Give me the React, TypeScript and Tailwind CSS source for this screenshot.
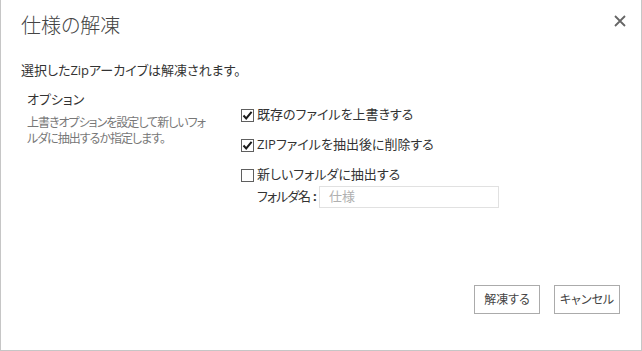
import React from "react";

type CheckRowProps = {
  checked: boolean;
  label: string;
};

function CheckRow({ checked, label }: CheckRowProps) {
  return (
    <div className="flex h-[18px] items-center">
      <span className="flex h-[13px] w-[13px] items-center justify-center border border-[#5f5f5f] bg-white">
        {checked && (
          <svg width="11" height="11" viewBox="0 0 11 11">
            <path d="M1.5 5.5 L4.2 8.4 L9.6 1.8" fill="none" stroke="#1a1a1a" strokeWidth="2" />
          </svg>
        )}
      </span>
      <span className="ml-[3px] whitespace-nowrap text-[13px] text-[#333]">{label}</span>
    </div>
  );
}

export default function App() {
  return (
    <div
      className="flex h-[351px] w-[642px] flex-col border-x border-b border-[#c6c6c6] bg-white text-[#444] [font-feature-settings:'palt']"
      style={{ fontFamily: "'Open Sans', 'Noto Sans CJK JP', sans-serif" }}
    >
      <div className="flex items-start justify-between pl-[20px] pr-[14px] pt-[12px]">
        <h1 className="text-[20px] leading-[28px] font-light text-[#444]">仕様の解凍</h1>
        <button className="mt-[2px] p-[1px]">
          <svg width="12" height="12" viewBox="0 0 12 12">
            <path d="M1 1 L11 11 M11 1 L1 11" stroke="#666" strokeWidth="1.8" />
          </svg>
        </button>
      </div>

      <p className="mt-[21px] pl-[20px] text-[13px] leading-[18px] text-[#333]">
        選択したZipアーカイブは解凍されます。
      </p>

      <div className="mt-[11px] flex">
        <div className="w-[240px] shrink-0 pl-[26px]">
          <div className="text-[13px] leading-[18px] text-[#333]">オプション</div>
          <p className="mt-[7px] whitespace-nowrap text-[12px] leading-[16px] tracking-[-1px] text-[#777]">
            上書きオプションを設定して新しいフォ
            <br />
            ルダに抽出するか指定します。
          </p>
        </div>
        <div className="flex flex-col pt-[16px]">
          <CheckRow checked label="既存のファイルを上書きする" />
          <div className="mt-[12px]">
            <CheckRow checked label="ZIPファイルを抽出後に削除する" />
          </div>
          <div className="mt-[12px]">
            <CheckRow checked={false} label="新しいフォルダに抽出する" />
          </div>
          <div className="mt-[2px] flex items-center pl-[16px]">
            <span className="flex w-[62px] shrink-0 items-center whitespace-nowrap text-[13px] text-[#333]">
              <span className="tracking-[-1px]">フォルダ名</span>
              <span className="ml-[3px] font-bold">:</span>
            </span>
            <div className="flex h-[22px] w-[180px] items-center border border-[#e1e1e1] px-[9px] text-[13px] text-[#b0b0b0]">
              仕様
            </div>
          </div>
        </div>
      </div>

      <div className="mt-auto flex justify-end gap-[14px] pb-[36px] pr-[21px]">
        <button className="h-[29px] w-[66px] border border-[#ababab] bg-white text-[12px] text-[#444]">
          解凍する
        </button>
        <button className="h-[29px] w-[66px] border border-[#ababab] bg-white text-[12px] text-[#444]">
          キャンセル
        </button>
      </div>
    </div>
  );
}
